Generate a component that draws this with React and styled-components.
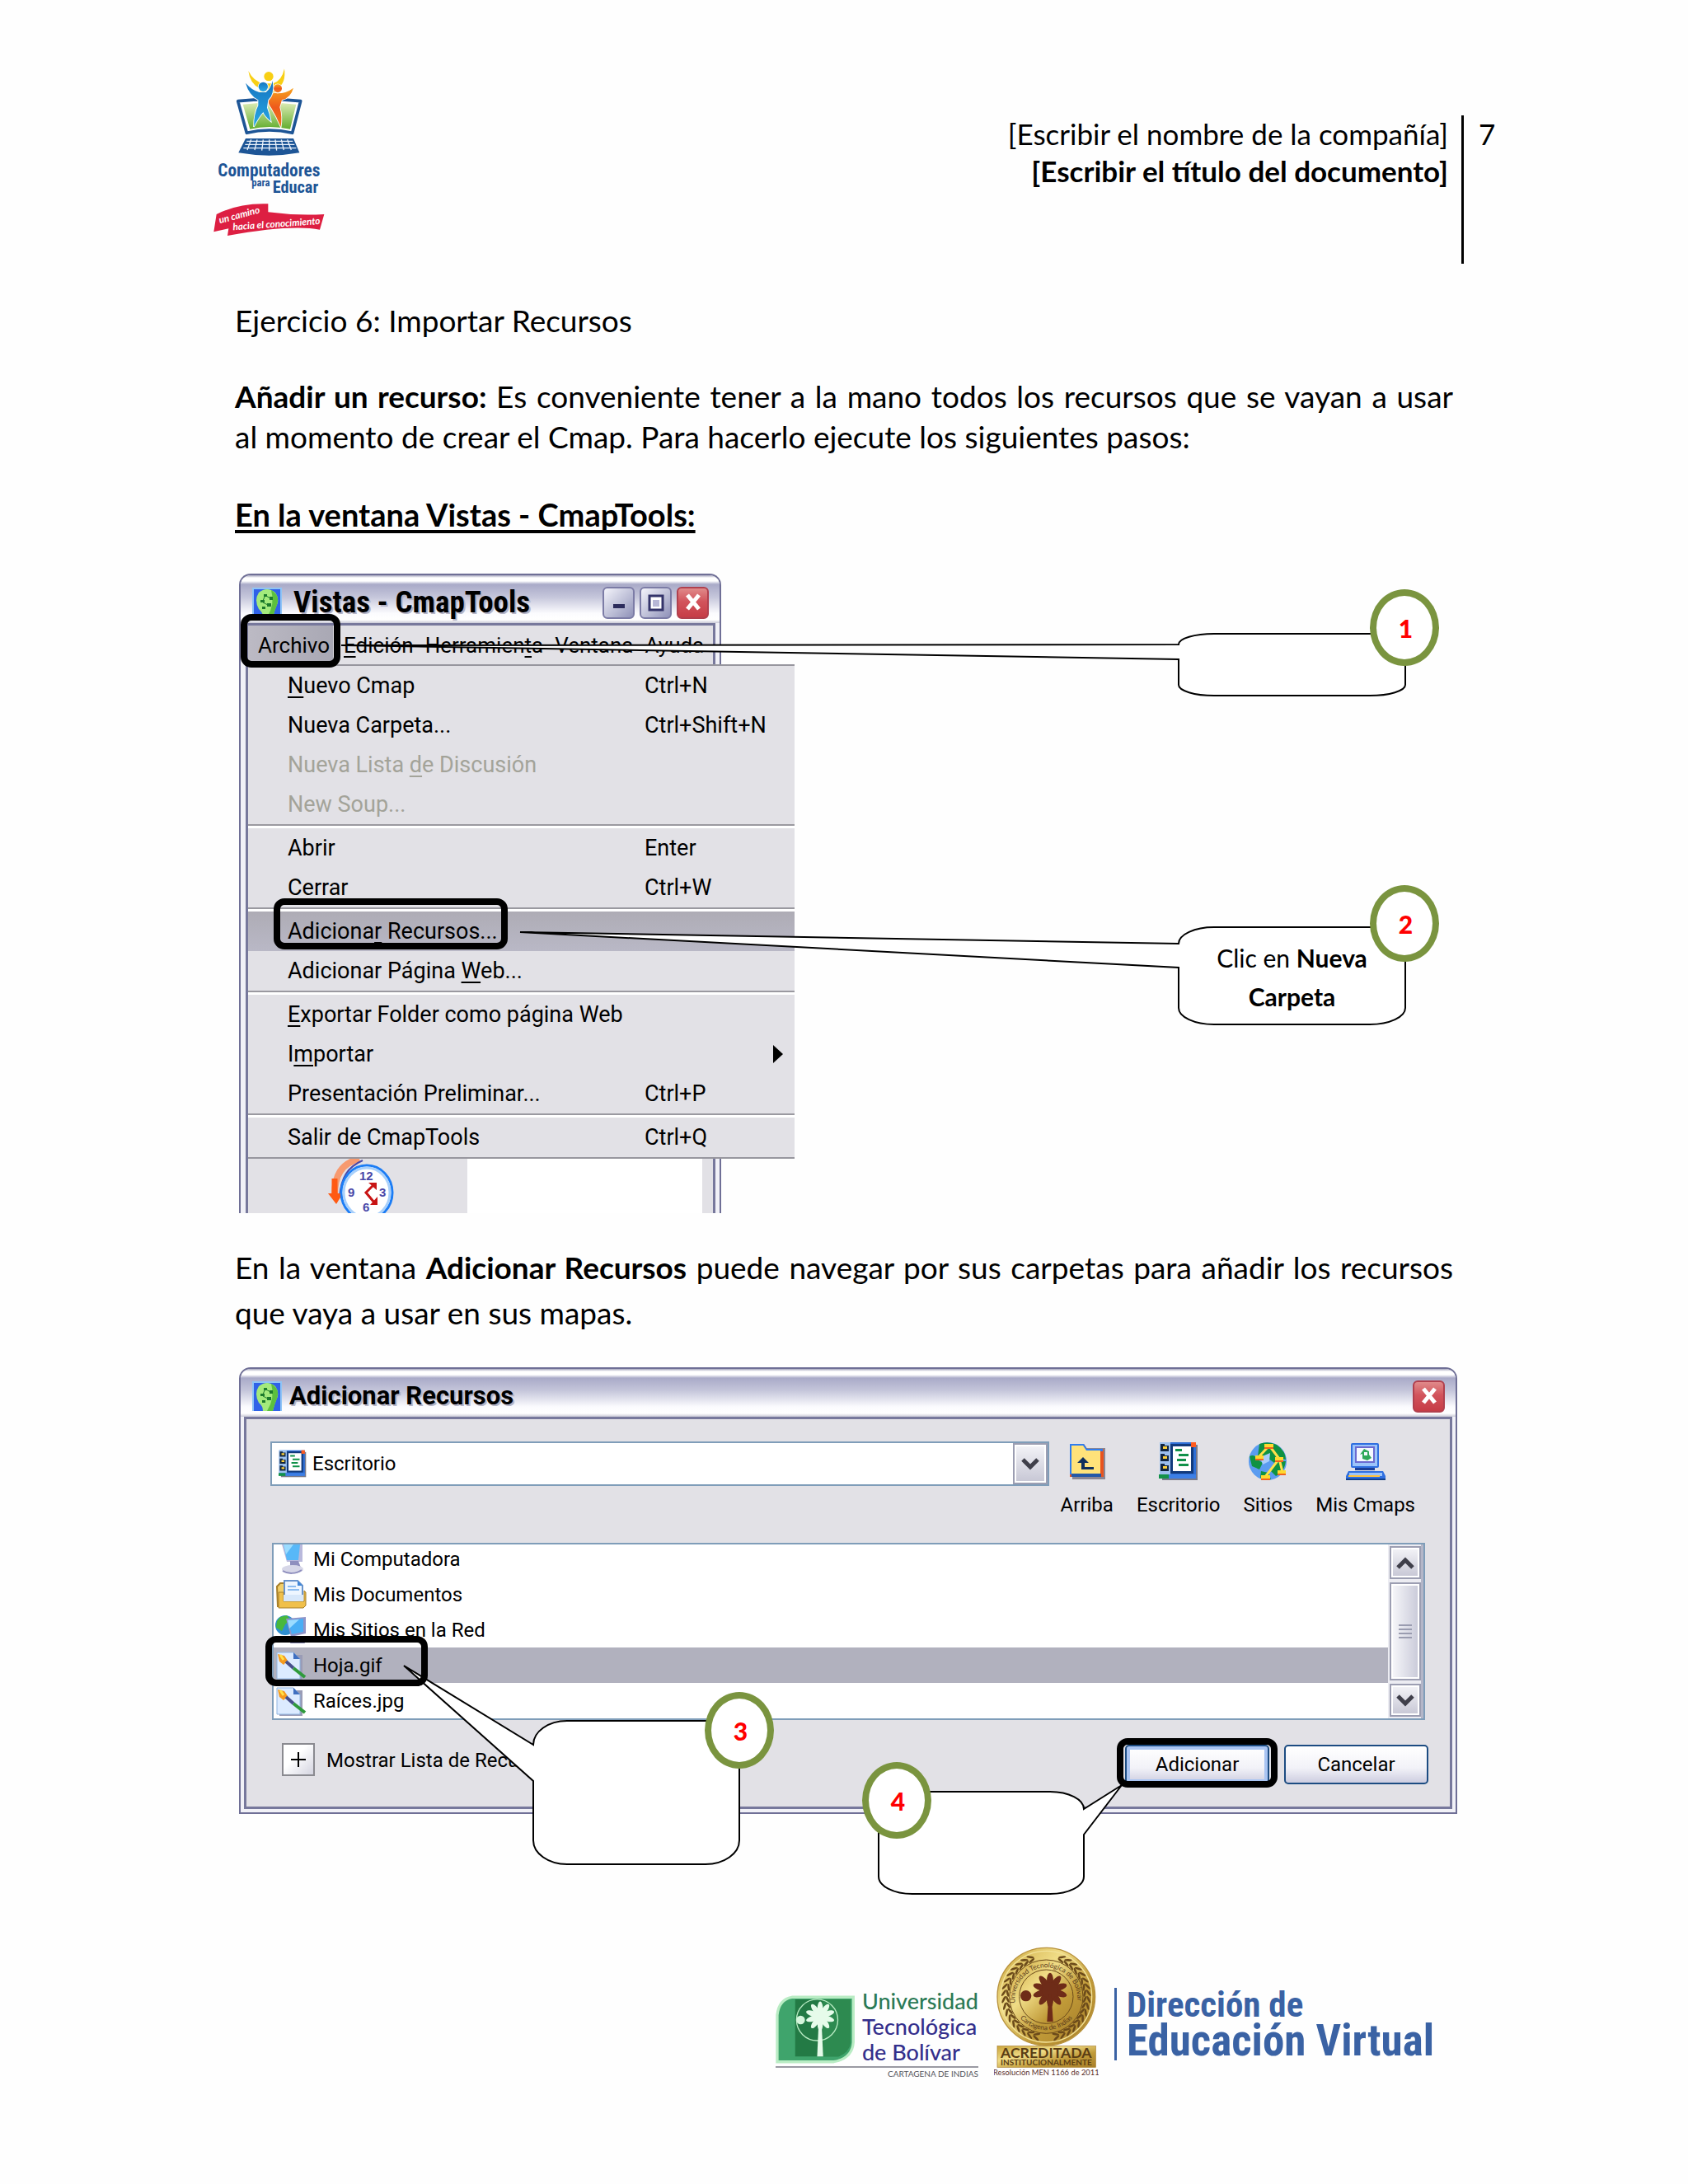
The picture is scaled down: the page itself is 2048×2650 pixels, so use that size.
import React, { memo } from "react";
import styled, { createGlobalStyle } from "styled-components";

const GlobalStyle = createGlobalStyle`
  body {
    margin: 0;
    background: #fefefe;
    color: #000;
    font-family: Lato, "Open Sans", sans-serif;
  }
  button, select {
    font: inherit;
    color: inherit;
    margin: 0;
  }
`;

/* ---------- icons ---------- */

const CmapIcon = memo(() => (
  <svg width="36" height="36" viewBox="0 0 36 36" aria-hidden="true">
    <rect width="36" height="36" fill="#8fc4f5" />
    <rect x="2" y="2" width="32" height="34" fill="#2f62e8" />
    <path d="M8 6Q18 -2 28 6Q34 15 29 23Q27 28 25 36H13Q13 30 8 26Q2 15 8 6Z" fill="#a4ea7c" />
    <path d="M23 3Q34 9 30 21Q27 28 25 36H18Q28 20 23 3Z" fill="#5cc03e" />
    <path d="M14 8h4v3h-4zM21 11h4v4h-4zM10 15h5v3h-5zM18 19h5v4h-5zM12 23h4v3h-4z" fill="#1c7a2c" />
    <path d="M17 10l5 3M13 18l6 3M15 11l-2 5" stroke="#1c7a2c" strokeWidth="1" />
  </svg>
));

const DesktopIcon = memo(({ size = 48 }) => (
  <svg width={size} height={size} viewBox="0 0 48 48" aria-hidden="true">
    <path d="M4 4h43v43H4z" fill="#77798a" />
    <path d="M1 1h44v40H1z" fill="#2f6fd6" />
    <path d="M14 3h28v36H14z" fill="#123a7c" />
    <path d="M1 1h13v39H1z" fill="#9cc0ee" />
    <path d="M2 3h5v2h5v7H2zM2 15h5v2h5v7H2zM2 27h5v2h5v7H2z" fill="#12263f" />
    <path d="M5 6h5v3H5zM5 18h5v3H5zM5 30h5v3H5z" fill="#ffd23c" />
    <path d="M17 6h22v30H17z" fill="#fff" />
    <path d="M20 9h8v3h-8zM24 15h12v3H24zM22 21h11v3H22zM24 27h12v3H24z" fill="#12924a" />
    <path d="M39 1h6v6h-6z" fill="#ff5a1e" />
    <path d="M0 40h12v5H0z" fill="#12924a" />
    <path d="M12 40h33v5H12z" fill="#3d7fe6" />
  </svg>
));

const UpFolderIcon = memo(() => (
  <svg width="48" height="48" viewBox="0 0 48 48" aria-hidden="true">
    <path d="M6 8h40v38H6z" fill="#8a8694" />
    <path d="M3 3h17l4 6h20v34H3z" fill="#e8531f" />
    <path d="M3 3h17l4 6h19v3H5v28H3z" fill="#2f7df0" />
    <path d="M5 5h14l4 6h17v28H5z" fill="#ffe27a" />
    <path d="M5 39h36v4H5z" fill="#2458a8" />
    <path d="M19 19l-7 7h5v8h15v-3H21v-5h5z" fill="#0f2f5c" />
  </svg>
));

const SitesIcon = memo(() => (
  <svg width="48" height="48" viewBox="0 0 48 48" aria-hidden="true">
    <circle cx="24" cy="24" r="23" fill="#5b9cf0" />
    <path d="M14 3Q24 -1 35 4Q46 12 46 22L38 20L32 26L24 20L18 24L12 18ZM2 18Q8 15 12 22L18 26L14 34L5 30ZM34 24L46 24Q44 38 34 42L28 36ZM16 36L25 38L28 46Q20 48 15 44Z" fill="#0f9242" />
    <path d="M15 19L27 14L26 24L18 28Z" fill="#a9cdfa" />
    <path d="M26 5L13 19M26 5l12 16-17 22M38 21l4 16" stroke="#ffe04a" strokeWidth="3" fill="none" />
    <path d="M20 3h11v4H20zM9 17h10v4H9zM33 19h10v4H33zM36 35h10v4H36zM16 41h11v4H16z" fill="#ffd92e" />
    <path d="M20 7h11v2H20zM9 21h10v2H9zM33 23h10v2H33zM36 39h10v2H36zM16 45h11v2H16z" fill="#f0641e" />
  </svg>
));

const MyCmapsIcon = memo(() => (
  <svg width="48" height="48" viewBox="0 0 48 48" aria-hidden="true">
    <rect x="6" y="2" width="34" height="30" rx="2" fill="#2f6fe0" />
    <rect x="8" y="4" width="30" height="26" fill="#9cc4fa" />
    <rect x="12" y="7" width="22" height="18" fill="#f5f8ff" stroke="#6a6ad0" strokeWidth="2" />
    <path d="M22 9l6 3v4l3 4-5 3-6-2v-6l-3 1z" fill="#2fa85a" />
    <path d="M22 13h4v4h-4z" fill="#f5f8ff" />
    <path d="M11 32h24v3H11z" fill="#1b3f96" />
    <path d="M3 36h42l3 6v5H0v-5z" fill="#2f6fe0" />
    <path d="M4 38h40v4H4z" fill="#9cc4fa" />
    <path d="M3 41h38v2H3z" fill="#ffc23c" />
    <path d="M0 45h48v2H0z" fill="#12408a" />
  </svg>
));

const ComputerIcon = () => (
  <svg width="38" height="36" viewBox="0 0 38 36" aria-hidden="true">
    <path d="M8 0h25v21H14z" fill="#b9b9dc" />
    <path d="M10 0h20l-2 19H14z" fill="#58b8f8" />
    <path d="M10 0h12l-9 12z" fill="#9bdcff" />
    <path d="M18 20h10l3 8H18z" fill="#8f8fbe" />
    <ellipse cx="21" cy="30" rx="13" ry="5" fill="#d7d7e8" />
    <path d="M9 32c6 4 16 4 23-1" stroke="#8f8fbe" strokeWidth="2" fill="none" />
  </svg>
);

const DocumentsIcon = () => (
  <svg width="38" height="36" viewBox="0 0 38 36" aria-hidden="true">
    <path d="M2 8l4-4h6v28H3z" fill="#f2cf6a" stroke="#a8802a" strokeWidth="2" />
    <path d="M11 1h16l6 6v20H11z" fill="#eef6ff" stroke="#6a94cc" strokeWidth="2" />
    <path d="M27 1v6h6z" fill="#3f86d8" />
    <path d="M15 8h10M15 12h14" stroke="#8bbcf0" strokeWidth="2" />
    <path d="M4 15h6v11h25V13l2 2v16l-3 3H4z" fill="#f0c04a" stroke="#a8802a" />
    <path d="M10 18h24v8H10z" fill="#d8e8fa" />
  </svg>
);

const NetworkIcon = () => (
  <svg width="38" height="36" viewBox="0 0 38 36" aria-hidden="true">
    <circle cx="12" cy="12" r="12" fill="#2f8fd0" />
    <path d="M6 2l8-2 4 5-6 6-4 8-7-4 1-8z" fill="#48b83c" />
    <path d="M13 4l24-2v20l-18 4z" fill="#8f94c8" />
    <path d="M15 6l19-2v16l-14 3z" fill="#49aef5" />
    <path d="M15 6l14-1-12 11z" fill="#9bdcff" />
    <path d="M22 25h10l4 9H18z" fill="#8385b0" />
  </svg>
);

const ImageFileIcon = () => (
  <svg width="38" height="36" viewBox="0 0 38 36" aria-hidden="true">
    <path d="M5 5h28v31H5z" fill="#9a9cb6" />
    <path d="M2 2h20l8 8v24H2z" fill="#dcebff" stroke="#8fb4e0" />
    <path d="M22 2v8h8z" fill="#3f6fc0" />
    <path d="M3 4l8 2 4 6-5 5-5-4z" fill="#f59a1e" />
    <path d="M6 5l4 6" stroke="#ffe14a" strokeWidth="3" />
    <path d="M13 13l9 8" stroke="#46508c" strokeWidth="4" />
    <path d="M22 21l14 11" stroke="#2f9a3c" strokeWidth="4" />
  </svg>
);

const ClockIcon = () => (
  <svg width="90" height="66" viewBox="0 0 90 66" aria-hidden="true">
    <path d="M38 0C16 6 8 20 8 44" stroke="#f79a70" strokeWidth="8" fill="none" />
    <path d="M42 2C24 10 16 22 14 46" stroke="#4a48a8" strokeWidth="2" fill="none" />
    <path d="M8 24v22" stroke="#ff5a14" strokeWidth="7" />
    <path d="M0 42h18l-8 13z" fill="#ff5a14" />
    <ellipse cx="47" cy="41" rx="31" ry="33" fill="#fff" stroke="#1c7df5" strokeWidth="3" />
    <ellipse cx="47" cy="41" rx="28" ry="30" fill="none" stroke="#a8d0fb" strokeWidth="3" />
    <g fill="#4a48a8" fontFamily="Liberation Sans, sans-serif" fontWeight="bold" fontSize="15">
      <text x="38" y="26">12</text>
      <text x="62" y="46">3</text>
      <text x="24" y="46">9</text>
      <text x="42" y="64">6</text>
    </g>
    <path d="M55 32L46 41l10 12" stroke="#c81414" strokeWidth="3" fill="none" />
    <path d="M49 29h10v9zM51 56h9v-10z" fill="#c81414" />
  </svg>
);

const Chevron = ({ up }) => (
  <svg width="22" height="15" viewBox="0 0 22 15" aria-hidden="true">
    <path d={up ? "M2 13l9-9 9 9" : "M2 2l9 9 9-9"} fill="none" stroke="#3f3f4a" strokeWidth="5" />
  </svg>
);

/* ---------- logos ---------- */

const ComputadoresLogo = () => (
  <svg width="180" height="230" viewBox="0 0 540 690" role="img" aria-label="Computadores para Educar">
    <defs>
      <linearGradient id="screen" x1="0" y1="0" x2="0" y2="1">
        <stop offset="0" stopColor="#dcebb4" />
        <stop offset="1" stopColor="#62ad2e" />
      </linearGradient>
      <linearGradient id="orange" x1="0" y1="0" x2="0" y2="1">
        <stop offset="0" stopColor="#f7a21c" />
        <stop offset="0.5" stopColor="#ee5a1c" />
        <stop offset="1" stopColor="#f07a1c" />
      </linearGradient>
      <linearGradient id="blue" x1="0" y1="0" x2="0" y2="1">
        <stop offset="0" stopColor="#1674c0" />
        <stop offset="1" stopColor="#28a8e4" />
      </linearGradient>
    </defs>
    <path d="M146 158Q260 146 374 158L344 274Q260 254 178 274Z" fill="#fff" stroke="#1d5596" strokeWidth="11" strokeLinejoin="round" />
    <path d="M164 170Q260 158 358 170L336 260Q260 244 190 260Z" fill="url(#screen)" />
    <g stroke="#fff" strokeWidth="5" paintOrder="stroke">
      <path d="M184 48Q204 88 240 94H274Q306 84 315 40Q322 92 290 112L286 160H224L226 112Q190 96 184 48Z" fill="#f8cf14" />
      <circle cx="258" cy="68" r="17" fill="#f8cf14" />
      <path d="M254 140Q270 126 290 130Q322 130 348 110Q338 146 306 154L298 180Q308 214 302 252Q286 214 268 184Q254 166 254 140Z" fill="url(#orange)" />
      <circle cx="291" cy="112" r="15" fill="url(#orange)" />
      <path d="M174 92Q196 118 224 126H248Q266 112 272 84Q280 134 256 154L252 182Q262 206 266 232Q244 214 238 198Q220 218 204 252Q204 204 220 174V154Q186 136 174 92Z" fill="url(#blue)" />
      <circle cx="238" cy="106" r="17" fill="url(#blue)" />
    </g>
    <path d="M174 294H348L370 346Q260 366 148 346Z" fill="#1d5596" />
    <path d="M178 304H346M172 316H352M166 329H358M194 298l-14 38M216 298l-9 38M238 298l-5 40M260 298v40M282 298l5 40M304 298l9 38M326 298l14 38" stroke="#eaf2fb" strokeWidth="4" />
    <g fill="#1d5596" fontFamily="Liberation Sans Narrow, Roboto Condensed, Roboto, sans-serif" fontWeight="bold">
      <text x="73" y="433" fontSize="64">Computadores</text>
      <text x="196" y="468" fontSize="38">para</text>
      <text x="272" y="491" fontSize="61">Educar</text>
    </g>
    <path d="M68 570Q150 528 256 532V562Q360 576 460 570L444 626Q340 606 108 648L112 622L58 634Z" fill="#dd1f42" />
    <g fill="#fff" fontFamily="Lato, sans-serif" fontStyle="italic" fontWeight="bold">
      <text x="80" y="604" fontSize="35" transform="rotate(-15 80 604)">un camino</text>
      <text x="128" y="628" fontSize="35" transform="rotate(-4 128 628)">hacia el conocimiento</text>
    </g>
  </svg>
);

const Palm = ({ x, y, r, trunk, color }) => (
  <g fill={color}>
    {[0, 36, 72, 108, 144, 180, 216, 252, 288, 324].map((a) => (
      <ellipse key={a} cx={x} cy={y - r / 2 - 4} rx={r / 5} ry={r / 2} transform={`rotate(${a} ${x} ${y})`} />
    ))}
    <circle cx={x} cy={y} r={r / 2} />
    <path d={`M${x - 5} ${y + 16}h10l6 ${trunk}h-22z`} />
  </g>
);

const UtbMark = () => (
  <svg width="98" height="85" viewBox="36 196 294 254" aria-hidden="true">
    <path d="M96 204H322V370Q318 430 250 442H42V270Q48 212 96 204Z" fill="#3fa46c" stroke="#b9ecc4" strokeWidth="10" />
    <path d="M108 212H312V370Q306 408 268 422H108Z" fill="#237a45" />
    <path d="M210 212H312V370Q306 408 268 422H210Z" fill="#2d8a50" />
    <circle cx="189" cy="288" r="76" fill="none" stroke="#b9ecc4" strokeWidth="4" />
    <circle cx="128" cy="288" r="16" fill="#d5f5dc" />
    <Palm x={200} y={274} r={50} trunk={132} color="#e6fbea" />
  </svg>
);

const leaves = Array.from({ length: 17 }, (_, i) => 22 + i * 9);

const Seal = () => (
  <svg width="127" height="164" viewBox="828 25 381 492" role="img" aria-label="Acreditada institucionalmente">
    <defs>
      <linearGradient id="gold" x1="0" y1="0" x2="1" y2="1">
        <stop offset="0" stopColor="#c9a43c" />
        <stop offset="0.35" stopColor="#f0dc86" />
        <stop offset="0.65" stopColor="#c09a38" />
        <stop offset="1" stopColor="#a87f2a" />
      </linearGradient>
      <path id="arcTop" d="M906 242A114 114 0 1 1 1130 242" />
      <path id="arcBottom" d="M908 270A126 126 0 0 0 1128 270" />
    </defs>
    <circle cx="1018" cy="213" r="178" fill="url(#gold)" stroke="#b8923c" strokeWidth="4" />
    <circle cx="1018" cy="213" r="166" fill="none" stroke="#f3e39a" strokeWidth="4" />
    {leaves.map((a) => (
      <g key={a} fill="#6b4a1a">
        <ellipse cx="1018" cy="58" rx="4" ry="14" transform={`rotate(${a} 1018 213) rotate(60 1018 58)`} />
        <ellipse cx="1018" cy="72" rx="4" ry="13" transform={`rotate(${a} 1018 213) rotate(110 1018 72)`} />
        <ellipse cx="1018" cy="58" rx="4" ry="14" transform={`rotate(${-a} 1018 213) rotate(-60 1018 58)`} />
        <ellipse cx="1018" cy="72" rx="4" ry="13" transform={`rotate(${-a} 1018 213) rotate(-110 1018 72)`} />
      </g>
    ))}
    <circle cx="1018" cy="213" r="134" fill="url(#gold)" stroke="#6b4a1a" strokeWidth="3" />
    <circle cx="1018" cy="213" r="98" fill="none" stroke="#6b4a1a" strokeWidth="3" />
    <g fill="#5a3a1a" fontFamily="Lato, sans-serif" fontSize="25">
      <text><textPath href="#arcTop" startOffset="6">Universidad Tecnológica de Bolívar</textPath></text>
      <text><textPath href="#arcBottom" startOffset="26">Cartagena de Indias</textPath></text>
    </g>
    <circle cx="944" cy="210" r="20" fill="#6e2c18" />
    <Palm x={1032} y={190} r={60} trunk={98} color="#6e2c18" />
    <rect x="840" y="393" width="358" height="77" fill="url(#gold)" stroke="#a87f2a" strokeWidth="2" />
    <g fill="#5a3d14" fontFamily="Lato, sans-serif" textAnchor="middle">
      <text x="1018" y="437" fontSize="53" fontWeight="bold">ACREDITADA</text>
      <text x="1018" y="463" fontSize="30" fontWeight="bold">INSTITUCIONALMENTE</text>
      <text x="1018" y="498" fontSize="28" fill="#5a2f2a">Resolución MEN 1166 de 2011</text>
    </g>
  </svg>
);

/* ---------- callouts ---------- */

const calloutPath = ({ x, y, w, h, rx, ry, tip, join, right }) => {
  const r = x + w;
  const b = y + h;
  const top = `M${x + rx} ${y}H${r - rx}A${rx} ${ry} 0 0 1 ${r} ${y + ry}`;
  const rightSide = right ? `L${tip[0]} ${tip[1]}L${r} ${join}` : "";
  const bottom = `V${b - ry}A${rx} ${ry} 0 0 1 ${r - rx} ${b}H${x + rx}A${rx} ${ry} 0 0 1 ${x} ${b - ry}`;
  const leftSide = right ? `V${y + ry}` : `V${join}L${tip[0]} ${tip[1]}L${x} ${y + ry}`;
  return `${top}${rightSide}${bottom}${leftSide}A${rx} ${ry} 0 0 1 ${x + rx} ${y}Z`;
};

const Callouts = ({ items }) => (
  <CalloutLayer aria-hidden="true">
    {items.map((item) => (
      <path key={item.y} d={calloutPath(item)} fill="#fff" stroke="#000" strokeWidth="2" />
    ))}
  </CalloutLayer>
);

const viewCallouts = [
  { x: 1145, y: 73, w: 275, h: 75, rx: 43, ry: 13, tip: [129, 87], join: 104 },
  { x: 1145, y: 429, w: 275, h: 118, rx: 43, ry: 20, tip: [346, 435], join: 478 },
];

const dialogCallouts = [
  { x: 362, y: 429, w: 250, h: 174, rx: 41, ry: 29, tip: [205, 362], join: 502 },
  { x: 781, y: 515, w: 249, h: 124, rx: 41, ry: 21, tip: [1076, 507], join: 567, right: true },
];

const menuGroups = [
  [
    { label: <><u>N</u>uevo Cmap</>, keys: "Ctrl+N" },
    { label: "Nueva Carpeta...", keys: "Ctrl+Shift+N" },
    { label: <>Nueva Lista <u>d</u>e Discusión</>, disabled: true },
    { label: "New Soup...", disabled: true },
  ],
  [
    { label: "Abrir", keys: "Enter" },
    { label: <><u>C</u>errar</>, keys: "Ctrl+W" },
  ],
  [
    { label: <>Adiciona<u>r</u> Recursos...</>, active: true },
    { label: <>Adicionar Página <u>W</u>eb...</> },
  ],
  [
    { label: <><u>E</u>xportar Folder como página Web</> },
    { label: <>I<u>m</u>portar</>, submenu: true },
    { label: "Presentación Preliminar...", keys: "Ctrl+P" },
  ],
  [{ label: "Salir de CmapTools", keys: "Ctrl+Q" }],
];

const places = [
  { label: "Arriba", Icon: UpFolderIcon },
  { label: "Escritorio", Icon: DesktopIcon },
  { label: "Sitios", Icon: SitesIcon },
  { label: "Mis Cmaps", Icon: MyCmapsIcon },
];

const files = [
  { label: "Mi Computadora", Icon: ComputerIcon },
  { label: "Mis Documentos", Icon: DocumentsIcon },
  { label: "Mis Sitios en la Red", Icon: NetworkIcon },
  { label: "Hoja.gif", Icon: ImageFileIcon, selected: true },
  { label: "Raíces.jpg", Icon: ImageFileIcon },
];

const CloseButton = () => (
  <WindowButton $close aria-label="Cerrar ventana">
    <svg width="22" height="22" viewBox="0 0 22 22" aria-hidden="true">
      <path d="M4 2l14 17M18 2L4 19" stroke="#fff" strokeWidth="5" />
    </svg>
  </WindowButton>
);

const ViewsWindow = memo(() => (
  <Views>
    <TitleBar>
      <CmapIcon />
      <Title $large>Vistas - CmapTools</Title>
      <WindowButton aria-label="Minimizar">
        <svg width="22" height="22" aria-hidden="true"><path d="M4 13h14v5H4z" fill="#2c2c5c" /></svg>
      </WindowButton>
      <WindowButton aria-label="Maximizar">
        <svg width="22" height="22" aria-hidden="true">
          <path d="M3 3h16v17H3z" fill="#fff" stroke="#34346a" strokeWidth="3" />
          <path d="M7 8h8v8H7z" fill="#b8b8d6" />
        </svg>
      </WindowButton>
      <CloseButton />
    </TitleBar>
    <MenuBar>
      <MenuBarItem $open>Archivo</MenuBarItem>
      <MenuBarItem><u>E</u>dición</MenuBarItem>
      <MenuBarItem>Herramien<u>t</u>a</MenuBarItem>
      <MenuBarItem>Ventana</MenuBarItem>
      <MenuBarItem>Ayuda</MenuBarItem>
      <Menu>
        {menuGroups.map((group, i) => (
          <MenuGroup key={i}>
            {group.map((item, j) => (
              <li key={j}>
                <MenuItem disabled={item.disabled} $active={item.active}>
                  <MenuLabel $marked={item.active}>{item.label}</MenuLabel>
                  {item.keys && <MenuKeys>{item.keys}</MenuKeys>}
                  {item.submenu && (
                    <svg width="12" height="22" aria-hidden="true"><path d="M0 0l12 11L0 22z" /></svg>
                  )}
                </MenuItem>
              </li>
            ))}
          </MenuGroup>
        ))}
      </Menu>
    </MenuBar>
    <ViewsBody>
      <SidePane>
        <ClockIcon />
      </SidePane>
    </ViewsBody>
  </Views>
));

const ResourcesDialog = memo(() => (
  <Dialog>
    <TitleBar>
      <CmapIcon />
      <Title>Adicionar Recursos</Title>
      <CloseButton />
    </TitleBar>
    <DialogBody>
      <PlaceRow>
        <PlaceSelect>
          <DesktopIcon size={34} />
          <select aria-label="Buscar en" defaultValue="Escritorio">
            <option>Escritorio</option>
          </select>
          <ScrollCap as="span">
            <Chevron />
          </ScrollCap>
        </PlaceSelect>
        {places.map(({ label, Icon }) => (
          <PlaceButton key={label}>
            <Icon />
            {label}
          </PlaceButton>
        ))}
      </PlaceRow>
      <FileBox>
        <FileList>
          {files.map(({ label, Icon, selected }) => (
            <li key={label}>
              <FileRow $selected={selected}>
                <Icon />
                {label}
              </FileRow>
            </li>
          ))}
        </FileList>
        <ScrollBar>
          <ScrollCap aria-label="Subir"><Chevron up /></ScrollCap>
          <ScrollThumb>
            <svg width="16" height="20" aria-hidden="true">
              <path d="M0 2h16M0 7h16M0 12h16M0 17h16" stroke="#9a9cb0" strokeWidth="2" />
            </svg>
          </ScrollThumb>
          <ScrollCap aria-label="Bajar"><Chevron /></ScrollCap>
        </ScrollBar>
      </FileBox>
      <ActionRow>
        <ExpandButton id="expand" aria-labelledby="expand-label">
          <svg width="18" height="18" aria-hidden="true"><path d="M9 0v18M0 9h18" stroke="#000" strokeWidth="2" /></svg>
        </ExpandButton>
        <ExpandLabel id="expand-label" htmlFor="expand">Mostrar Lista de Recursos</ExpandLabel>
        <ActionButton $marked>Adicionar</ActionButton>
        <ActionButton>Cancelar</ActionButton>
      </ActionRow>
    </DialogBody>
  </Dialog>
));

const App = memo(() => (
  <>
    <GlobalStyle />
    <Header>
      <ComputadoresLogo />
      <HeaderText>
        <div>[Escribir el nombre de la compañía]</div>
        <strong>[Escribir el título del documento]</strong>
      </HeaderText>
      <PageNumber>7</PageNumber>
    </Header>
    <Main>
      <h1>Ejercicio 6: Importar Recursos</h1>
      <Paragraph>
        <strong>Añadir un recurso:</strong> Es conveniente tener a la mano todos los recursos que se
        vayan a usar al momento de crear el Cmap. Para hacerlo ejecute los siguientes pasos:
      </Paragraph>
      <h2>En la ventana Vistas - CmapTools:</h2>
      <Figure>
        <ViewsWindow />
        <Callouts items={viewCallouts} />
        <CalloutText>
          <span>Clic en <strong>Nueva</strong></span>
          <strong>Carpeta</strong>
        </CalloutText>
        <Badge $x={1377} $y={19}>1</Badge>
        <Badge $x={1377} $y={378}>2</Badge>
      </Figure>
      <Paragraph $loose>
        En la ventana <strong>Adicionar Recursos</strong> puede navegar por sus carpetas para añadir
        los recursos que vaya a usar en sus mapas.
      </Paragraph>
      <Figure>
        <ResourcesDialog />
        <Callouts items={dialogCallouts} />
        <Badge $x={570} $y={394}>3</Badge>
        <Badge $x={761} $y={479}>4</Badge>
      </Figure>
    </Main>
    <Footer>
      <Utb>
        <UtbRow>
          <UtbMark />
          <UtbName>
            <span>Universidad</span>
            Tecnológica
            <br />
            de Bolívar
          </UtbName>
        </UtbRow>
        <UtbCity>CARTAGENA DE INDIAS</UtbCity>
      </Utb>
      <Seal />
      <Department>
        <small>Dirección de</small>
        <div>Educación Virtual</div>
      </Department>
    </Footer>
  </>
));

/* ---------- page ---------- */

const Header = styled.header`
  display: flex;
  align-items: flex-start;
  padding: 70px 227px 0 240px;
  font-size: 35px;
  line-height: 45px;
`;

const HeaderText = styled.div`
  flex: 1;
  padding-top: 70px;
  padding-right: 16px;
  text-align: right;
`;

const PageNumber = styled.div`
  box-sizing: border-box;
  width: 48px;
  height: 180px;
  margin-top: 70px;
  padding-left: 18px;
  border-left: 3px solid #000;
`;

const Main = styled.main`
  padding: 45px 285px 0;
  h1,
  h2 {
    margin: 0;
    line-height: 48px;
  }
  h1 {
    font-size: 37px;
    font-weight: normal;
  }
  h2 {
    font-size: 38px;
    text-decoration: underline;
    text-decoration-thickness: 4px;
    text-underline-offset: 4px;
    text-decoration-skip-ink: none;
  }
`;

const Paragraph = styled.p`
  margin: ${(p) => (p.$loose ? "38px 0 39px" : "43px 0 46px")};
  font-size: 37px;
  line-height: ${(p) => (p.$loose ? "55px" : "49px")};
  text-align: justify;
`;

const Figure = styled.figure`
  position: relative;
  margin: 0;
  h2 + & {
    margin-top: 48px;
  }
`;

const CalloutLayer = styled.svg`
  position: absolute;
  top: 0;
  left: 0;
  width: 100%;
  height: 100%;
  overflow: visible;
  pointer-events: none;
`;

const CalloutText = styled.figcaption`
  position: absolute;
  top: 429px;
  left: 1145px;
  width: 275px;
  padding-top: 14px;
  display: flex;
  flex-direction: column;
  align-items: center;
  font-size: 30px;
  line-height: 47px;
`;

const Badge = styled.div`
  position: absolute;
  left: ${(p) => p.$x}px;
  top: ${(p) => p.$y}px;
  box-sizing: border-box;
  width: 84px;
  height: 93px;
  display: flex;
  align-items: center;
  justify-content: center;
  padding-left: 3px;
  border: 8px solid #7a943f;
  border-radius: 50%;
  background: #fff;
  color: #f00;
  font-size: 30px;
  font-weight: 900;
`;

/* ---------- windows ---------- */

const mark = `
  content: "";
  position: absolute;
  z-index: 1;
  border: 8px solid #000;
  border-radius: 13px;
  pointer-events: none;
`;

const Window = styled.section`
  box-sizing: border-box;
  margin-left: 5px;
  border: 2px solid #6f6f96;
  border-radius: 14px 14px 0 0;
  background: #f1f1f7;
  font-family: Roboto, "Noto Sans", sans-serif;
`;

const Views = styled(Window)`
  width: 585px;
  border-bottom: 0;
  font-size: 26px;
`;

const Dialog = styled(Window)`
  margin-right: -5px;
  padding-bottom: 4px;
  font-size: 24px;
`;

const TitleBar = styled.div`
  display: flex;
  align-items: center;
  gap: 6px;
  height: 42px;
  padding: 12px 13px 4px 14px;
  border-radius: 12px 12px 0 0;
  background: linear-gradient(#a4a4bc 0, #fff 3px, #fff 7px, #a9aac8 11px, #c4c5da 26px, #fbfbfe 46px, #fff 54px, #c9c9d6 58px);
`;

const Title = styled.div`
  flex: 1;
  padding-left: ${(p) => (p.$large ? 8 : 3)}px;
  font-family: ${(p) => (p.$large ? '"Roboto Condensed", ' : "")}Roboto, sans-serif;
  font-size: ${(p) => (p.$large ? 37 : 31)}px;
  font-weight: bold;
  line-height: 38px;
  text-shadow: 2px 2px 0 #b4b4c6;
  white-space: nowrap;
`;

const WindowButton = styled.button`
  display: flex;
  align-items: center;
  justify-content: center;
  width: 39px;
  height: 39px;
  padding: 0;
  border: 2px solid ${(p) => (p.$close ? "#b0404e" : "#7c7ca6")};
  border-radius: 6px;
  background: ${(p) =>
    p.$close
      ? "linear-gradient(#e08a8a, #d2545c 45%, #c63c46)"
      : "linear-gradient(135deg, #f4f4fb, #b9bbd4 60%, #8f91b8)"};
`;

const MenuBar = styled.div`
  position: relative;
  display: flex;
  align-items: stretch;
  height: 48px;
  margin: 0 5px 0 6px;
  border: 3px solid #77789c;
  border-bottom: 0;
  background: #e2e1e6;
`;

const MenuBarItem = styled.button`
  position: relative;
  padding: 0 7px;
  border: 0;
  background: ${(p) => (p.$open ? "linear-gradient(90deg, #bcbac4, #a9a8b4)" : "none")};
  ${(p) => p.$open && `padding: 0 4px 0 12px; margin-right: 6px;`}
  u {
    text-decoration-thickness: 2px;
    text-underline-offset: 4px;
  }
  &::after {
    ${(p) => (p.$open ? `${mark} inset: -14px -9px -3px -9px;` : "")}
  }
`;

const Menu = styled.div`
  position: absolute;
  top: 47px;
  left: 0;
  width: 663px;
  border-top: 2px solid #97969e;
  border-bottom: 2px solid #97969e;
  background: #e2e1e6;
  font-size: 27px;
`;

const MenuGroup = styled.ul`
  margin: 0;
  padding: 0;
  list-style: none;
  & + & {
    border-top: 2px solid #9a99a0;
    box-shadow: inset 0 3px #fff;
    padding-top: 3px;
  }
`;

const MenuItem = styled.button`
  display: flex;
  align-items: center;
  width: 100%;
  height: 48px;
  padding: 0 14px 0 48px;
  border: 0;
  text-align: left;
  background: ${(p) => (p.$active ? "linear-gradient(#aeacb5, #b9b8c6)" : "none")};
  color: ${(p) => (p.disabled ? "#a3a399" : "#000")};
  u {
    text-decoration-thickness: 2px;
    text-underline-offset: 4px;
  }
`;

const MenuLabel = styled.span`
  position: relative;
  flex: 1;
  white-space: nowrap;
  &::after {
    ${(p) => (p.$marked ? `${mark} top: -24px; left: -17px; width: 268px; height: 46px;` : "")}
  }
`;

const MenuKeys = styled.span`
  width: 168px;
`;

const ViewsBody = styled.div`
  display: flex;
  height: 665px;
  margin: 0 5px 0 6px;
  border: solid #77789c;
  border-width: 0 3px;
  background: linear-gradient(270deg, #e2e1e6 13px, #fff 13px);
`;

const SidePane = styled.div`
  box-sizing: border-box;
  display: flex;
  align-items: flex-end;
  justify-content: center;
  width: 266px;
  padding-left: 18px;
  background: #e2e1e6;
`;

const DialogBody = styled.div`
  margin: 0 4px;
  padding: 27px 28px 27px 29px;
  border: 3px solid #77789c;
  background: #e2e1e6;
`;

const PlaceRow = styled.div`
  display: flex;
  align-items: flex-start;
`;

const PlaceSelect = styled.div`
  flex: 1;
  display: flex;
  align-items: center;
  height: 50px;
  padding-left: 8px;
  border: 2px solid #7f9db9;
  background: #fff;
  select {
    flex: 1;
    height: 100%;
    padding: 0 0 0 7px;
    border: 0;
    appearance: none;
    background: none;
  }
`;

const PlaceButton = styled.button`
  display: flex;
  flex-direction: column;
  align-items: center;
  gap: 13px;
  padding: 0 14px;
  border: 0;
  background: none;
  line-height: 32px;
`;

const FileBox = styled.div`
  display: flex;
  margin: 30px 2px 28px 2px;
  border: 2px solid #7f9db9;
  background: #fff;
`;

const FileList = styled.ul`
  flex: 1;
  margin: -4px 0 0;
  padding: 0;
  list-style: none;
`;

const FileRow = styled.button`
  position: relative;
  display: flex;
  align-items: center;
  gap: 8px;
  width: 100%;
  height: 43px;
  padding: 0 0 0 2px;
  border: 0;
  background: ${(p) => (p.$selected ? "#b1b1be" : "none")};
  &::after {
    ${(p) => (p.$selected ? `${mark} top: -14px; left: -10px; width: 181px; height: 45px;` : "")}
  }
`;

const ScrollBar = styled.div`
  display: flex;
  flex-direction: column;
  gap: 4px;
  width: 38px;
  padding: 2px 3px 2px 2px;
  background: linear-gradient(270deg, #b4b6c8 3px, #ececf2 3px);
`;

const ScrollCap = styled.button`
  box-sizing: border-box;
  display: flex;
  align-items: center;
  justify-content: center;
  width: 38px;
  height: 40px;
  padding: 0;
  border: 2px solid #9c9eb2;
  box-shadow: inset 0 0 0 2px #fff;
  background: linear-gradient(#f4f4f8, #c6c6d4);
  ${PlaceSelect} & {
    width: 42px;
    height: 50px;
  }
`;

const ScrollThumb = styled.div`
  flex: 1;
  display: flex;
  align-items: center;
  justify-content: center;
  border: 2px solid #9c9eb2;
  box-shadow: inset 0 0 0 2px #fff;
  background: linear-gradient(90deg, #f8f8fb, #c8c9d8);
`;

const ActionRow = styled.div`
  display: flex;
  align-items: flex-start;
  height: 50px;
  padding-left: 14px;
  margin-right: -2px;
`;

const ExpandButton = styled.button`
  display: flex;
  align-items: center;
  justify-content: center;
  width: 40px;
  height: 40px;
  padding: 0;
  border: 2px solid #8a8a90;
  background: linear-gradient(135deg, #fff 40%, #d4d4e0);
`;

const ExpandLabel = styled.label`
  flex: 1;
  padding-left: 14px;
  line-height: 42px;
`;

const ActionButton = styled.button`
  position: relative;
  width: 175px;
  height: 48px;
  margin: 2px 0 0 18px;
  border: 2px solid #1c4c82;
  border-radius: 5px;
  background: linear-gradient(#fff, #f2f2f8 60%, #cdcde0);
  ${(p) => p.$marked && `box-shadow: inset 0 0 0 4px #a9c4f2;`}
  &::after {
    ${(p) => (p.$marked ? `${mark} inset: -10px -12px -6px;` : "")}
  }
`;

/* ---------- footer ---------- */

const Footer = styled.footer`
  display: flex;
  align-items: flex-end;
  justify-content: flex-end;
  gap: 19px;
  margin-top: 159px;
  padding: 0 308px 126px;
`;

const Utb = styled.div`
  width: 246px;
`;

const UtbRow = styled.div`
  display: flex;
  align-items: flex-end;
  gap: 8px;
  padding-bottom: 2px;
  border-bottom: 2px solid #9a9aa2;
`;

const UtbName = styled.div`
  color: #342f8c;
  font-size: 27px;
  font-weight: 500;
  line-height: 31px;
  span {
    display: block;
    color: #2b7a56;
  }
`;

const UtbCity = styled.div`
  color: #55555c;
  font-size: 10px;
  line-height: 15px;
  text-align: right;
`;

const Department = styled.div`
  margin-bottom: 24px;
  padding-left: 12px;
  border-left: 3px solid #3a62a4;
  color: #3a62a4;
  font-family: "Liberation Sans Narrow", "Roboto Condensed", "Liberation Sans", sans-serif;
  font-size: 53px;
  font-weight: bold;
  line-height: 48px;
  white-space: nowrap;
  small {
    display: block;
    font-size: 43px;
    line-height: 40px;
  }
`;

export default App;
